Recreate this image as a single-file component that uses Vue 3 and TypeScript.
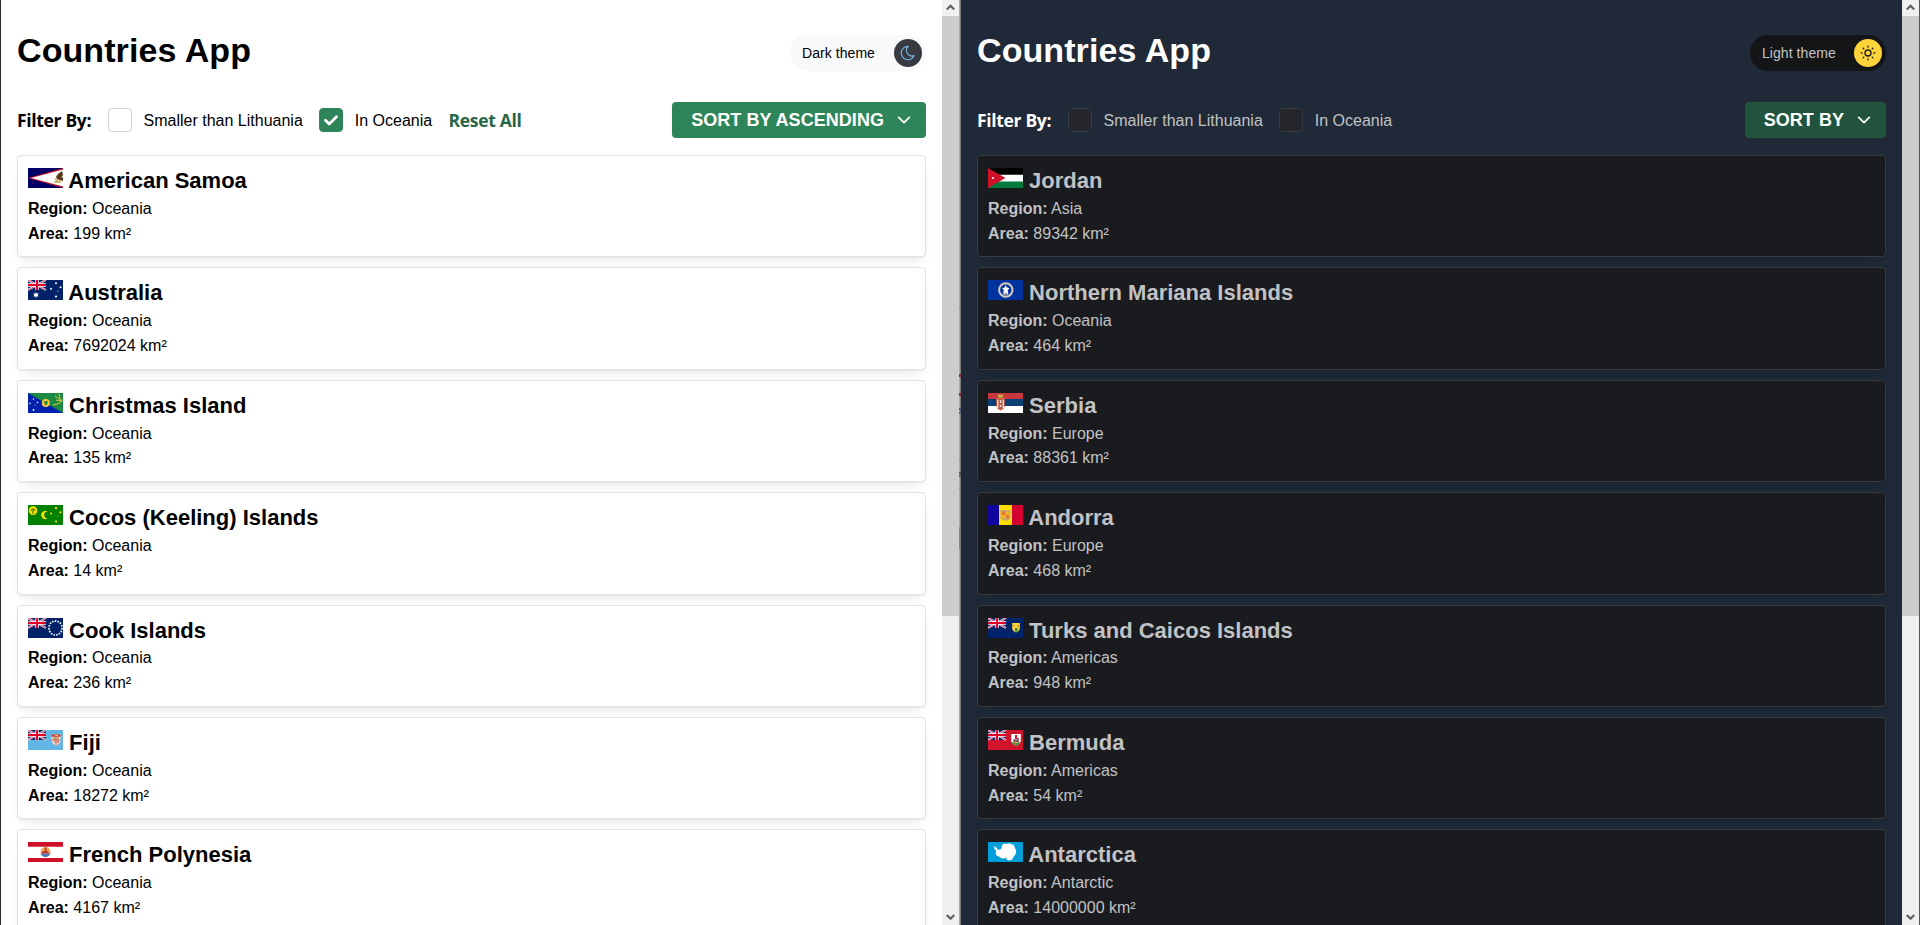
<script setup lang="ts">
interface Country {
  name: string
  region: string
  area: number
  flag: string
}

interface Panel {
  theme: 'light' | 'dark'
  toggle: string
  sort: string
  oceania: boolean
  countries: Country[]
}

const panels: Panel[] = [
  {
    theme: 'light',
    toggle: 'Dark theme',
    sort: 'Sort by ascending',
    oceania: true,
    countries: [
      { name: 'American Samoa', region: 'Oceania', area: 199, flag: 'as' },
      { name: 'Australia', region: 'Oceania', area: 7692024, flag: 'au' },
      { name: 'Christmas Island', region: 'Oceania', area: 135, flag: 'cx' },
      { name: 'Cocos (Keeling) Islands', region: 'Oceania', area: 14, flag: 'cc' },
      { name: 'Cook Islands', region: 'Oceania', area: 236, flag: 'ck' },
      { name: 'Fiji', region: 'Oceania', area: 18272, flag: 'fj' },
      { name: 'French Polynesia', region: 'Oceania', area: 4167, flag: 'pf' },
    ],
  },
  {
    theme: 'dark',
    toggle: 'Light theme',
    sort: 'Sort by',
    oceania: false,
    countries: [
      { name: 'Jordan', region: 'Asia', area: 89342, flag: 'jo' },
      { name: 'Northern Mariana Islands', region: 'Oceania', area: 464, flag: 'mp' },
      { name: 'Serbia', region: 'Europe', area: 88361, flag: 'rs' },
      { name: 'Andorra', region: 'Europe', area: 468, flag: 'ad' },
      { name: 'Turks and Caicos Islands', region: 'Americas', area: 948, flag: 'tc' },
      { name: 'Bermuda', region: 'Americas', area: 54, flag: 'bm' },
      { name: 'Antarctica', region: 'Antarctic', area: 14000000, flag: 'aq' },
    ],
  },
]

const ensigns: Record<string, string> = { au: '#012169', ck: '#012169', fj: '#62b5e5', tc: '#00246b', bm: '#cf142b' }

const ring = Array.from({ length: 15 }, (_, i) => {
  const a = (i / 15) * Math.PI * 2
  return { x: 27.5 + 6.6 * Math.sin(a), y: 10 - 7 * Math.cos(a) }
})
</script>

<template>
  <div class="screen">
    <template v-for="p in panels" :key="p.theme">
      <section class="panel" :class="p.theme">
        <header class="head">
          <h1>Countries App</h1>
          <button class="toggle">
            <span class="toggle-label">{{ p.toggle }}</span>
            <span class="knob">
              <svg v-if="p.theme === 'light'" width="18" height="18" viewBox="0 0 24 24">
                <path d="M12 3c.132 0 .263 0 .393 0a7.5 7.5 0 0 0 7.92 12.446a9 9 0 1 1 -8.313 -12.454z" />
              </svg>
              <svg v-else width="18" height="18" viewBox="0 0 24 24">
                <circle cx="12" cy="12" r="4" />
                <path d="M3 12h1M12 3v1M20 12h1M12 20v1M5.6 5.6l.7 .7M18.4 5.6l-.7 .7M17.7 17.7l.7 .7M6.3 17.7l-.7 .7" />
              </svg>
            </span>
          </button>
        </header>

        <div class="toolbar">
          <span class="filter-title">Filter By:</span>
          <label class="check"><span class="box"></span><span class="check-label">Smaller than Lithuania</span></label>
          <label class="check">
            <span class="box" :class="{ on: p.oceania }">
              <svg v-if="p.oceania" width="14" height="11" viewBox="0 0 14 11">
                <path d="M1.5 5.2 5.2 8.9 12.5 1.7" />
              </svg>
            </span><span class="check-label">In Oceania</span>
          </label>
          <a v-if="p.oceania" class="reset">Reset All</a>
          <button class="sort">
            {{ p.sort }}
            <svg width="18" height="18" viewBox="0 0 18 18"><path d="M3.7 6.3 9 11.7 14.3 6.3" /></svg>
          </button>
        </div>

        <article v-for="c in p.countries" :key="c.name" class="card">
          <h3>
            <svg class="flag" width="35" height="20" viewBox="0 0 35 20">
              <template v-if="c.flag === 'as'">
                <path fill="#006" d="M0 0h35v20H0z" />
                <path fill="#bd1021" d="M0 10 35 0v20z" />
                <path fill="#fff" d="M3 10 35 1.6v16.8z" />
                <path fill="#5a3719" d="m34 3-4 3-2 3 1 2 2 1 4 1V9l-2 1 2-3z" />
                <path d="m27 11 4 3M26 14h7" stroke="#c5a24a" stroke-width="1.3" />
              </template>
              <template v-else-if="ensigns[c.flag]">
                <path :fill="ensigns[c.flag]" d="M0 0h35v20H0z" />
                <path fill="#012169" d="M0 0h18v10H0z" />
                <path d="m0 0 18 10M18 0 0 10" stroke="#fff" stroke-width="2" />
                <path d="m0 0 18 10M18 0 0 10" stroke="#e4002b" stroke-width=".7" />
                <path d="M9 0v10M0 5h18" stroke="#fff" stroke-width="3.4" />
                <path d="M9 0v10M0 5h18" stroke="#e4002b" stroke-width="2" />
                <g v-if="c.flag === 'au'" fill="#fff">
                  <path d="m8 12 .8 1.7 1.9-.4-.9 1.7.9 1.6-1.9-.3L8 18l-.8-1.7-1.9.3.9-1.6-.9-1.7 1.9.4z" />
                  <circle cx="28" cy="3.2" r="1" /><circle cx="23" cy="8.7" r="1" />
                  <circle cx="32.5" cy="7.3" r="1" /><circle cx="28" cy="16.5" r="1.1" />
                  <circle cx="30" cy="11" r=".6" />
                </g>
                <g v-else-if="c.flag === 'ck'" fill="#fff">
                  <circle v-for="(s, i) in ring" :key="i" :cx="s.x" :cy="s.y" r=".95" />
                </g>
                <g v-else-if="c.flag === 'fj'">
                  <path fill="#f5ddd0" d="M23.5 4.5h9V11q-1 3.5-4.5 4.5Q24.5 14.5 23.5 11z" />
                  <path fill="#c8342e" d="M23.5 4.5h9v2.2h-9z" />
                  <path d="M28 6v9M24 10h8" stroke="#d4473f" stroke-width="1" />
                  <circle cx="26" cy="8.3" r="1.1" fill="#9aa84b" /><circle cx="30" cy="8.3" r="1" fill="#9aa84b" />
                  <circle cx="30" cy="12" r="1" fill="#a97d55" /><circle cx="26.2" cy="12" r=".8" fill="#8fa29b" />
                  <path d="M27 5.5h3" stroke="#f5c84d" />
                </g>
                <g v-else-if="c.flag === 'tc'">
                  <path fill="#ffd72e" d="M24.2 5h7.6v6q-.8 2.5-3.8 3.6-3-1.1-3.8-3.6z" />
                  <circle cx="26.2" cy="7.5" r="1" fill="#e0a070" /><circle cx="30" cy="8" r=".8" fill="#d0603f" />
                  <path fill="#1a8b4b" d="M27 10h2.5v3.5H27z" />
                </g>
                <g v-else>
                  <path fill="#fff" d="M23.2 4h9.6v7.5q-1 3-4.8 4.2-3.8-1.2-4.8-4.2z" />
                  <path fill="#3f8f45" d="M23.5 12.2h9q-1.5 2.6-4.5 3.5-3-.9-4.500-3.500z" />
                  <path fill="#b4222d" d="M27 5h2.200v3h1.500v4h-5.200V9H27z" />
                  <circle cx="28" cy="10" r="1.600" fill="#7890a0" /><path fill="#d7b23c" d="M26 12h4v1h-4z" />
                </g>
              </template>
              <template v-else-if="c.flag === 'cx'">
                <path fill="#0021ad" d="M0 0h35v20H0z" /><path fill="#1c8a42" d="M0 0h35v20z" />
                <circle cx="17.8" cy="10" r="4" fill="#ffc639" />
                <path fill="#1c8a42" d="m15.5 8.5 4.5-.5-1 3.5-1.5 1z" />
                <path d="m27 3 3 2 4 4M31 1l1 4 2 3M34 8q-4 4-9 4M28 7l6 1" fill="none" stroke="#e3c43c" stroke-width="1" />
                <g fill="#fff"><circle cx="5.5" cy="6" r=".8" /><circle cx="2" cy="10.5" r=".8" /><circle cx="9.5" cy="9.5" r=".8" /><circle cx="5.5" cy="17" r=".9" /><circle cx="7" cy="12" r=".5" /></g>
              </template>
              <template v-else-if="c.flag === 'cc'">
                <path fill="#008000" d="M0 0h35v20H0z" />
                <circle cx="5" cy="5.6" r="4.3" fill="#ffe000" />
                <path d="M5 9V5M2.5 5.5 5 3.8l2.5 1.7" fill="none" stroke="#6a8a10" stroke-width="1.5" />
                <path fill="#ffe000" d="M19.5 6.7a4 4 0 1 0 0 6.6 3.3 3.3 0 1 1 0-6.6z" />
                <g fill="#ffe000"><circle cx="23" cy="8.5" r="1" /><circle cx="28" cy="3.2" r="1.1" /><circle cx="32.5" cy="7.3" r="1.1" /><circle cx="28" cy="16.5" r="1.1" /><circle cx="30" cy="11" r=".6" /></g>
              </template>
              <template v-else-if="c.flag === 'pf'">
                <path fill="#fff" d="M0 0h35v20H0z" /><path fill="#ce1126" d="M0 0h35v4.700H0zM0 16h35v4H0z" />
                <circle cx="17.5" cy="10" r="5" fill="#f5a65b" />
                <path fill="#4a7bc0" d="M12.6 11.5h9.8q-1.5 3.6-4.9 3.6t-4.9-3.6z" />
                <path fill="#b5302f" d="M16.7 5.5h1.8v4h2v1.7h-6.5V9.5h2.7z" />
              </template>
              <template v-else-if="c.flag === 'jo'">
                <path fill="#fff" d="M0 0h35v20H0z" /><path d="M0 0h35v6.7H0z" /><path fill="#007a3d" d="M0 13.5h35V20H0z" />
                <path fill="#ce1126" d="m0 0 17.5 10L0 20z" /><circle cx="5" cy="10" r="1.1" fill="#fff" />
              </template>
              <template v-else-if="c.flag === 'mp'">
                <path fill="#0032a0" d="M0 0h35v20H0z" />
                <circle cx="17.8" cy="10" r="6.7" fill="none" stroke="#d9c9bd" stroke-width="2" />
                <path fill="#8c98a8" d="M15.5 7h4.6v8.5h-4.6z" />
                <path fill="#fff" d="m17.8 4.5 1 3.4h2.8l-2.1 2.3 1 4.3-2.7-2-2.7 2 1-4.3-2.1-2.3h2.8z" />
              </template>
              <template v-else-if="c.flag === 'rs'">
                <path fill="#fff" d="M0 0h35v20H0z" /><path fill="#c6363c" d="M0 0h35v6H0z" /><path fill="#0c4076" d="M0 6h35v7H0z" />
                <path fill="#c6563c" d="M8.2 5h8.6v8q-1 3.5-4.3 4.5-3.3-1-4.3-4.5z" />
                <path d="M9.7 6.5V15M15.3 6.5V15M12.5 7v3M12.5 12v2" stroke="#f3e2df" stroke-width="1.3" />
                <path fill="#c6a24a" d="M9.5 1.5h6l-1 3.5h-4z" />
              </template>
              <template v-else-if="c.flag === 'ad'">
                <path fill="#10069f" d="M0 0h11v20H0z" /><path fill="#fedd00" d="M11 0h13v20H11z" /><path fill="#d50032" d="M24 0h11v20H24z" />
                <path fill="#c6aa76" d="M12.5 5h10v9l-5 2-5-2z" /><path fill="#e07a35" d="M14 6.5h3.5V10H14zM17.5 10H21v3.5h-3.5z" />
                <path fill="#f0b02a" d="M17.5 6.5H21V10h-3.5zM14 10h3.5v3.5H14z" />
              </template>
              <template v-else>
                <path fill="#009fda" d="M0 0h35v20H0z" />
                <path fill="#fff" d="m6.300 4 2 1.5 1.5 2 2 .3 2-1.8-.2-2.5 2.5-2 2.5.5 2.5-.7 3 1 2 1.2 1 3 1.2 2-.6 3.5-2 2.5-1.5 3-2.5 1-3-.8-.3-2.2-2 1-3-.2-2-1.5-3-1.2-.8-3 1-1.7-2.2-1.8z" />
              </template>
            </svg> {{ c.name }}
          </h3>
          <p><b>Region:</b> {{ c.region }}</p>
          <p><b>Area:</b> {{ c.area }} km²</p>
        </article>
      </section>

      <div class="scrollbar">
        <svg width="17" height="16" viewBox="0 0 17 16"><path d="M4.8 9.5 8.5 5.8l3.7 3.7" /></svg>
        <div class="thumb"></div>
        <svg class="down" width="17" height="17" viewBox="0 0 17 17"><path d="m4.8 7 3.7 3.7L12.2 7" /></svg>
      </div>
      <svg v-if="p.theme === 'light'" class="divider" width="2" height="925" viewBox="0 0 2 925">
        <path fill="#a9a9a9" d="M0 0h1v925H0z" />
        <path fill="#7d7d7d" d="M1 0h1v925H1z" />
        <path fill="#8e2b35" d="M0 374h2v3H0zM0 393h2v3H0z" />
        <path fill="#53617a" d="M0 408h2v6H0z" />
        <path fill="#b09a78" d="M0 410h1v2H0z" />
        <path fill="#3c3c3c" d="M0 472h2v1H0zM0 474h2v1H0zM0 476h2v1H0z" />
        <path fill="#858585" d="M0 527h1v22H0zM0 307h1v1H0zM0 459h1v1H0zM0 488h1v1H0z" />
      </svg>
    </template>
  </div>
</template>

<style>
body {
  margin: 0;
  overflow: hidden;
}
</style>

<style scoped>
* {
  box-sizing: border-box;
}
.screen {
  display: flex;
  width: 1920px;
  height: 925px;
  overflow: hidden;
  border-left: 1px solid #2b2b2e;
  border-right: 1px solid #55565a;
  font-family: "Liberation Sans", Arial, sans-serif;
  font-size: 16px;
}
.panel {
  flex: none;
  width: 941px;
  height: 925px;
  padding: 0 16px;
  overflow: hidden;
  background: #fff;
  color: #000;
}
.head {
  display: flex;
  align-items: center;
  justify-content: space-between;
  height: 36px;
  margin-top: 35px;
}
h1 {
  margin: 0 0 6px;
  font-size: 34px;
  line-height: 44px;
  letter-spacing: 0.08px;
}
button {
  border: 0;
  font-family: inherit;
  color: inherit;
}
.toggle {
  display: flex;
  align-items: center;
  width: 136px;
  height: 36px;
  padding: 0 4px 0 0;
  border-radius: 18px;
  background: #f8f9fa;
}
.toggle-label {
  flex: 1;
  padding-left: 12px;
  text-align: left;
  font-size: 14px;
  letter-spacing: 0.06px;
}
.knob {
  display: grid;
  place-items: center;
  width: 28px;
  height: 28px;
  border-radius: 50%;
  background: #373a40;
}
.knob svg {
  fill: none;
  stroke: #74b4e4;
  stroke-width: 1.5;
  stroke-linecap: round;
  stroke-linejoin: round;
}
.toolbar {
  display: flex;
  align-items: center;
  height: 36px;
  margin: 31px 0 17px;
  white-space: nowrap;
}
.filter-title,
.reset {
  font-family: "Open Sans", "Noto Sans", sans-serif;
  font-size: 17.5px;
  font-weight: 700;
  letter-spacing: -0.33px;
}
.filter-title {
  width: 91px;
}
.check {
  display: flex;
  align-items: center;
  margin-right: 16.4px;
}
.check-label {
  padding-top: 1px;
}
.box {
  display: grid;
  place-items: center;
  width: 24px;
  height: 24px;
  margin-right: 11.6px;
  border: 1px solid #ced4da;
  border-radius: 4px;
  background: #fff;
}
.box.on {
  background: #2f855a;
  border-color: #2f855a;
}
.box path {
  fill: none;
  stroke: #fff;
  stroke-width: 2.8;
  stroke-linecap: round;
  stroke-linejoin: round;
}
.reset {
  color: #276749;
}
.sort {
  display: flex;
  align-items: center;
  gap: 11px;
  height: 36px;
  margin-left: auto;
  padding: 0 13px 0 19px;
  border-radius: 4px;
  background: #2f855a;
  color: #fff;
  font-size: 18px;
  font-weight: 700;
  letter-spacing: 0.05px;
  text-transform: uppercase;
}
.sort path {
  fill: none;
  stroke: #fff;
  stroke-width: 1.7;
  stroke-linecap: round;
  stroke-linejoin: round;
}
.card {
  height: 102.4px;
  margin-bottom: 10px;
  padding: 10.1px 10px 0;
  border: 1px solid #dee2e6;
  border-radius: 4px;
  background: #fff;
  box-shadow: 0 1px 3px rgba(0, 0, 0, 0.05), 0 10px 15px -5px rgba(0, 0, 0, 0.05), 0 7px 7px -5px rgba(0, 0, 0, 0.04);
}
h3 {
  height: 30.8px;
  margin: 0;
  font-size: 22px;
  line-height: 30.8px;
}
p {
  margin: 0;
  line-height: 24.8px;
}
.dark {
  background: #1f2937;
  color: #fff;
}
.dark .toggle {
  background: #141517;
  color: #c1c2c5;
}
.dark .knob {
  background: #ffd43b;
}
.dark .knob svg {
  stroke: #1a1b1e;
  stroke-width: 1.8;
}
.dark .check {
  color: #c1c2c5;
}
.dark .box {
  background: #25262b;
  border-color: #373a40;
}
.dark .sort {
  background: #22543d;
}
.dark .card {
  background: #1a1b1e;
  border-color: #373a40;
  color: #c1c2c5;
}
.scrollbar {
  display: flex;
  flex-direction: column;
  flex: none;
  width: 17px;
  background: #f0f0f0;
}
.scrollbar path {
  fill: none;
  stroke: #606060;
  stroke-width: 2.2;
}
.thumb {
  height: 600px;
  background: #cdcdcd;
}
.down {
  margin-top: auto;
}
.divider {
  flex: none;
}
</style>
